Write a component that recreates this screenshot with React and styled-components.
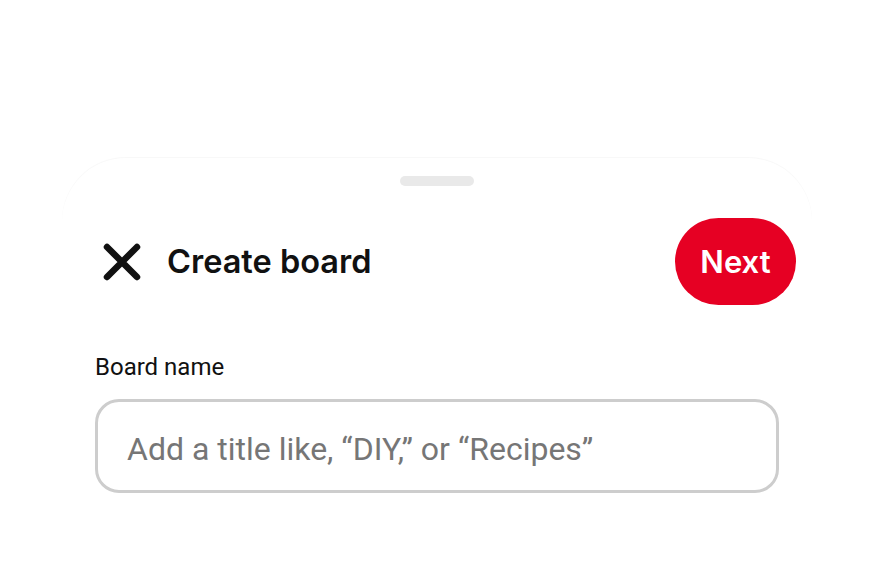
import React from 'react'
import styled, { createGlobalStyle } from 'styled-components'

const GlobalStyle = createGlobalStyle`
  html, body {
    margin: 0;
    padding: 0;
    background: #fff;
  }
  body {
    font-family: Roboto, "Liberation Sans", sans-serif;
    color: #111;
  }
`

const Page = styled.div`
  width: 874px;
  height: 576px;
  overflow: hidden;
  padding-top: 158px;
  box-sizing: border-box;
`

const Sheet = styled.section`
  width: 750px;
  margin-left: 62px;
  height: 418px;
  border-radius: 64px 64px 0 0;
  box-shadow: 0 -1px 1px rgba(0, 0, 0, 0.03);
  background: #fff;
  display: flex;
  flex-direction: column;
`

const Handle = styled.div`
  width: 74px;
  height: 10px;
  border-radius: 5px;
  background: #e9e9e9;
  margin: 18px auto 0;
`

const Header = styled.header`
  display: flex;
  align-items: center;
  justify-content: space-between;
  padding: 0 16px 0 41px;
  margin-top: 32px;
`

const TitleGroup = styled.div`
  display: flex;
  align-items: center;
  gap: 26px;
`

const CloseButton = styled.button`
  border: none;
  background: none;
  padding: 0;
  width: 38px;
  height: 38px;
  display: flex;
  align-items: center;
  justify-content: center;
  cursor: pointer;
`

const Title = styled.h1`
  margin: 0;
  font-family: Inter, "Noto Sans", sans-serif;
  font-weight: 600;
  font-size: 32.5px;
  color: #111;
`

const NextButton = styled.button`
  border: none;
  background: #e60023;
  color: #fff;
  width: 121px;
  height: 87px;
  border-radius: 44px;
  font-family: Inter, "Noto Sans", sans-serif;
  font-weight: 600;
  font-size: 31px;
  cursor: pointer;
`

const Form = styled.div`
  padding: 0 33px;
  margin-top: 48px;
`

const Label = styled.label`
  display: block;
  font-size: 24px;
  color: #111;
  margin-bottom: 18px;
`

const Input = styled.input`
  display: block;
  width: 100%;
  box-sizing: border-box;
  height: 94px;
  border: 3px solid #cdcdcd;
  border-radius: 24px;
  padding: 6px 29px 0;
  font-family: Roboto, "Liberation Sans", sans-serif;
  font-size: 32px;
  color: #111;
  outline: none;
  &::placeholder {
    color: #767676;
  }
`

const CloseIcon = () => (
  <svg width="38" height="38" viewBox="0 0 38 38">
    <path d="M4 4 L34 34 M34 4 L4 34" stroke="#111" strokeWidth="6.5" strokeLinecap="round" />
  </svg>
)

export default function App() {
  return (
    <>
      <GlobalStyle />
      <Page>
        <Sheet>
          <Handle />
          <Header>
            <TitleGroup>
              <CloseButton aria-label="Close">
                <CloseIcon />
              </CloseButton>
              <Title>Create board</Title>
            </TitleGroup>
            <NextButton>Next</NextButton>
          </Header>
          <Form>
            <Label htmlFor="board-name">Board name</Label>
            <Input id="board-name" placeholder="Add a title like, “DIY,” or “Recipes”" />
          </Form>
        </Sheet>
      </Page>
    </>
  )
}
